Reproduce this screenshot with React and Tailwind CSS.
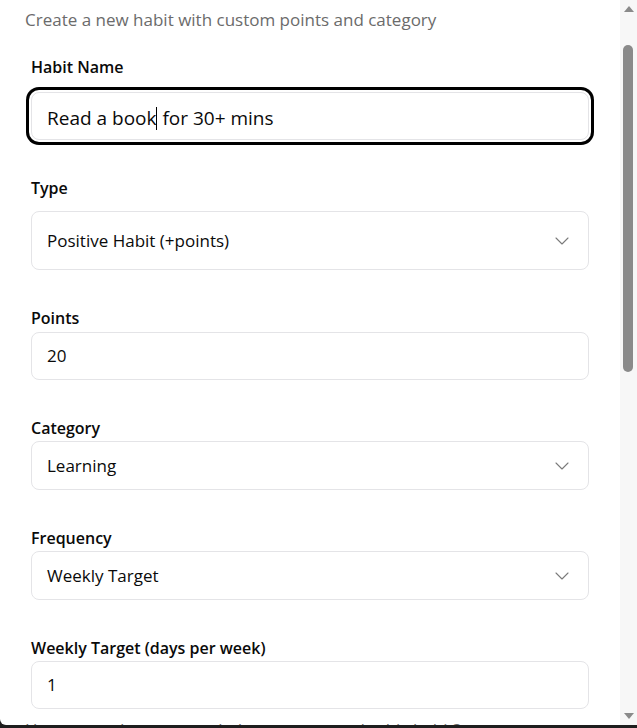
import React from "react";
import { ChevronDown } from "lucide-react";

const font = { fontFamily: "'Open Sans', 'Liberation Sans', sans-serif" };

const Label = ({ children, className = "" }) => (
  <div className={`text-base leading-6 font-semibold text-[#0a0a0a] ${className}`}>{children}</div>
);

const SelectBox = ({ value, h = "h-[49px]" }) => (
  <div className={`${h} w-full rounded-lg border border-[#e4e4e7] bg-white flex items-center justify-between pl-[15px] pr-[14px]`}>
    <span className="text-[17px] text-[#0a0a0a]">{value}</span>
    <ChevronDown size={24} strokeWidth={1.1} className="text-[#7a7a7a]" />
  </div>
);

const InputBox = ({ value }) => (
  <div className="h-12 w-full rounded-lg border border-[#e4e4e7] bg-white flex items-center pl-[15px]">
    <span className="text-[17px] text-[#0a0a0a]">{value}</span>
  </div>
);

export default function App() {
  return (
    <div className="relative w-[637px] h-[728px] bg-[#1e1e1e] overflow-hidden" style={font}>
      <div className="relative h-[725px] bg-white rounded-bl-[6px] overflow-hidden">
        <div className="pr-[17px]">
          <p className="pt-2 pl-[25px] text-[17px] leading-6 text-[#6b6b6b]">
            Create a new habit with custom points and category
          </p>

          <div className="px-[31px]">
            <Label className="mt-[23px]">Habit Name</Label>
            <div className="mt-[13px] h-12 w-full rounded-lg border border-[#e4e4e7] bg-white flex items-center pl-[15px] pt-1 shadow-[0_0_0_2px_#ffffff,0_0_0_5px_#000000]">
              <span className="text-[19px] text-[#0a0a0a] flex items-center">
                Read a book
                <span className="inline-block w-px h-[23px] bg-black" />
                &nbsp;for 30+ mins
              </span>
            </div>

            <Label className="mt-[36px]">Type</Label>
            <div className="mt-[11px]">
              <SelectBox value="Positive Habit (+points)" h="h-[59px]" />
            </div>

            <Label className="mt-[36px]">Points</Label>
            <div className="mt-[2px]">
              <InputBox value="20" />
            </div>

            <Label className="mt-[36px]">Category</Label>
            <div className="mt-px">
              <SelectBox value="Learning" />
            </div>

            <Label className="mt-[36px]">Frequency</Label>
            <div className="mt-px">
              <SelectBox value="Weekly Target" />
            </div>

            <Label className="mt-[36px]">Weekly Target (days per week)</Label>
            <div className="mt-px">
              <InputBox value="1" />
            </div>

            <p className="mt-[9px] -ml-[6px] text-[17px] leading-6 text-[#6b6b6b]">
              How many days per week do you want to do this habit?
            </p>
          </div>
        </div>

        {/* scrollbar */}
        <div className="absolute right-0 top-0 w-[17px] h-full bg-[#f7f7f7]">
          <div className="absolute left-[4px] top-[6px] w-0 h-0 border-l-[5px] border-r-[5px] border-b-[6px] border-l-transparent border-r-transparent border-b-[#8a8a8a]" />
          <div className="absolute left-[3px] top-[45px] w-[10px] h-[327px] rounded-full bg-[#8a8a8a]" />
          <div className="absolute left-[4px] bottom-[6px] w-0 h-0 border-l-[5px] border-r-[5px] border-t-[6px] border-l-transparent border-r-transparent border-t-[#8a8a8a]" />
        </div>
      </div>
    </div>
  );
}
